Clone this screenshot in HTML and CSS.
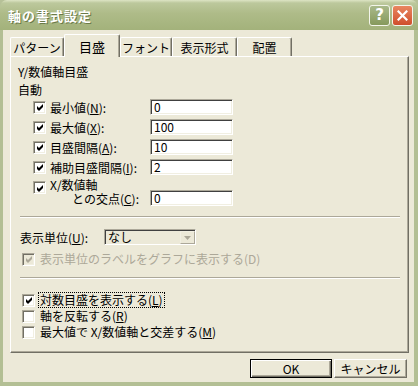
FILE: index.html
```html
<!DOCTYPE html>
<html lang="ja">
<head>
    <meta charset="UTF-8">
    <title>軸の書式設定</title>
    <link rel="stylesheet" href="styles.css">
</head>
<body>
    <div class="window">
        <div class="titlebar">
            <span class="title">軸の書式設定</span>
            <span class="tbtn help">?</span>
            <span class="tbtn close">
                <svg width="11" height="11" viewBox="0 0 11 11"><path d="M1.5 1.5 L9.5 9.5 M9.5 1.5 L1.5 9.5" stroke="#fff" stroke-width="2.2" stroke-linecap="square"/></svg>
            </span>
        </div>
        <div class="client">
            <div class="tabs">
                <div class="tab w-pattern">パターン</div>
                <div class="tab active w-scale">目盛</div>
                <div class="tab w-font">フォント</div>
                <div class="tab w-format">表示形式</div>
                <div class="tab w-align">配置</div>
            </div>
            <div class="panel">
                <div class="heading">Y/数値軸目盛</div>
                <div class="auto">自動</div>

                <div class="row">
                    <span class="cb"><svg width="7" height="7" viewBox="0 0 7 7"><path d="M0 2 L2 4 L6 0 L6 3 L2 7 L0 5 Z"/></svg></span>
                    <span class="lbl">最小値(<u>N</u>):</span>
                    <span class="field">0</span>
                </div>
                <div class="row">
                    <span class="cb"><svg width="7" height="7" viewBox="0 0 7 7"><path d="M0 2 L2 4 L6 0 L6 3 L2 7 L0 5 Z"/></svg></span>
                    <span class="lbl">最大値(<u>X</u>):</span>
                    <span class="field">100</span>
                </div>
                <div class="row">
                    <span class="cb"><svg width="7" height="7" viewBox="0 0 7 7"><path d="M0 2 L2 4 L6 0 L6 3 L2 7 L0 5 Z"/></svg></span>
                    <span class="lbl">目盛間隔(<u>A</u>):</span>
                    <span class="field">10</span>
                </div>
                <div class="row">
                    <span class="cb"><svg width="7" height="7" viewBox="0 0 7 7"><path d="M0 2 L2 4 L6 0 L6 3 L2 7 L0 5 Z"/></svg></span>
                    <span class="lbl">補助目盛間隔(<u>I</u>):</span>
                    <span class="field">2</span>
                </div>
                <div class="row two-line">
                    <span class="cb"><svg width="7" height="7" viewBox="0 0 7 7"><path d="M0 2 L2 4 L6 0 L6 3 L2 7 L0 5 Z"/></svg></span>
                    <span class="lbl"><span class="line">X/数値軸</span><span class="line indent">との交点(<u>C</u>):</span></span>
                    <span class="field">0</span>
                </div>

                <div class="sep"></div>

                <div class="unit-row">
                    <span class="unit-lbl">表示単位(<u>U</u>):</span>
                    <span class="combo">
                        <span class="combo-text">なし</span>
                        <span class="combo-btn"><svg width="7" height="4" viewBox="0 0 7 4"><path d="M0 0 H7 L3.5 4 Z" fill="#aca899"/></svg></span>
                    </span>
                </div>
                <div class="check-row disabled">
                    <span class="cb"><svg width="7" height="7" viewBox="0 0 7 7"><path d="M0 2 L2 4 L6 0 L6 3 L2 7 L0 5 Z"/></svg></span>
                    <span class="text">表示単位のラベルをグラフに表示する(D)</span>
                </div>

                <div class="sep sep-low"></div>

                <div class="options">
                    <div class="check-row">
                        <span class="cb"><svg width="7" height="7" viewBox="0 0 7 7"><path d="M0 2 L2 4 L6 0 L6 3 L2 7 L0 5 Z"/></svg></span>
                        <span class="text focus">対数目盛を表示する(<u>L</u>)</span>
                    </div>
                    <div class="check-row">
                        <span class="cb"></span>
                        <span class="text">軸を反転する(<u>R</u>)</span>
                    </div>
                    <div class="check-row">
                        <span class="cb"></span>
                        <span class="text">最大値で X/数値軸と交差する(<u>M</u>)</span>
                    </div>
                </div>
            </div>
            <div class="buttons">
                <span class="btn default">OK</span>
                <span class="btn cancel">キャンセル</span>
            </div>
        </div>
    </div>
</body>
</html>
```

FILE: styles.css
```css
body {margin: 0; font-family: "Noto Sans CJK JP", "Noto Sans", sans-serif; font-size: 12px; color: #000; background: #b6c198}
.window {width: 418px; height: 386px; display: flex; flex-direction: column; background: #b3bf94; border-radius: 7px 7px 0 0; overflow: hidden}

/* title bar */
.titlebar {height: 30px; flex: none; display: flex; align-items: center; padding: 0 5px 0 8px; box-sizing: border-box; background: linear-gradient(#dde4c4 0, #bcc89c 3px, #aebb88 45%, #a3b27b 100%)}
.title {flex: 1; color: #fff; font-weight: bold; font-size: 13px; letter-spacing: 1px; text-shadow: 1px 1px 0 #6b7a48}
.tbtn {width: 21px; height: 21px; box-sizing: border-box; border: 1px solid #f3f5ea; border-radius: 3px; display: flex; align-items: center; justify-content: center; color: #fff; font-weight: bold; font-size: 15px; font-family: "DejaVu Sans", sans-serif}
.help {background: linear-gradient(#a9b98a, #86995c); margin-right: 2px}
.close {background: linear-gradient(#e98660, #cf4f2c)}

.client {flex: 1; margin: 0 4px 4px 3px; background: #ece9d8}

/* tabs */
.tabs {display: flex; height: 26px; padding: 4px 0 0 7px; box-sizing: border-box}
.tab {margin-top: 3px; height: 19px; box-sizing: border-box; border: 1px solid; border-color: #fff #716f64 transparent #fff; border-bottom: none; box-shadow: inset -1px 0 #aca899; border-radius: 2px 2px 0 0; display: flex; align-items: center; justify-content: center; padding-top: 1px}
.tab.active {margin-top: 0; height: 23px; position: relative; z-index: 1; background: #ece9d8; font-size: 13px; padding-top: 0}
.w-pattern {width: 54px}
.w-scale {width: 56px}
.w-font {width: 52px}
.w-format {width: 65px}
.w-align {width: 55px}

/* panel */
.panel {margin-left: 7px; width: 399px; height: 297px; box-sizing: border-box; border: 1px solid; border-color: #fff #716f64 #716f64 #fff; box-shadow: inset -1px -1px 0 #aca899}
.heading {margin: 7px 0 0 7px; line-height: 16px}
.auto {margin: 3px 0 0 7px; line-height: 14px}

.row {display: flex; align-items: center; height: 20px; padding-left: 22px}
.lbl {margin-left: 4px; width: 100px; white-space: nowrap}
.two-line {height: 30px; align-items: flex-start}
.two-line .cb {margin-top: 4px}
.two-line .lbl {display: flex; flex-direction: column; padding-top: 1px}
.two-line .line {display: block; height: 14px; line-height: 14px}
.two-line .field {margin-top: 13px}
.indent {padding-left: 22px}

.cb {width: 13px; height: 13px; flex: none; box-sizing: border-box; background: #fff; border: 1px solid; border-color: #aca899 #fff #fff #aca899; box-shadow: inset 1px 1px 0 #716f64, inset -1px -1px 0 #f1efe2; display: flex; align-items: center; justify-content: center; padding: 1px 0 0 1px}
.cb svg {fill: #000}
.field {width: 83px; height: 16px; flex: none; box-sizing: border-box; background: #fff; border: 1px solid; border-color: #aca899 #fff #fff #aca899; box-shadow: inset 1px 1px 0 #404040, inset -1px -1px 0 #f1efe2; padding-left: 3px; line-height: 14px}

.sep {margin: 9px 8px 0 9px; border-top: 1px solid #aca899; border-bottom: 1px solid #fff}
.sep-low {margin-top: 10px}

.unit-row {display: flex; align-items: center; height: 18px; margin-top: 10px; padding-left: 9px}
.unit-lbl {width: 84px}
.combo {width: 92px; height: 16px; box-sizing: border-box; display: flex; border: 1px solid; border-color: #aca899 #fff #fff #aca899; box-shadow: inset 1px 1px 0 #404040; background: #ece9d8}
.combo-text {flex: 1; padding-left: 3px; line-height: 14px}
.combo-btn {width: 15px; height: 13px; margin: 1px 0 0 0; box-sizing: border-box; border: 1px solid; border-color: #f1efe2 #aca899 #aca899 #f1efe2; display: flex; align-items: center; justify-content: center}

.check-row {display: flex; align-items: center; height: 16px; padding-left: 11px}
.check-row .text {margin-left: 4px; line-height: 14px; padding: 0 1px}
.disabled {margin-top: 5px; color: #aca899}
.disabled .cb {background: #ece9d8}
.disabled .cb svg {fill: #aca899}
.focus {outline: 1px dotted #000}
.options {margin-top: 13px}

/* buttons */
.buttons {display: flex; justify-content: flex-end; gap: 2px; padding: 6px 7px 0 0}
.btn {height: 19px; box-sizing: border-box; display: flex; align-items: center; justify-content: center; border: 1px solid; border-color: #fff #716f64 #716f64 #fff; box-shadow: inset -1px -1px 0 #aca899}
.default {width: 82px; border-color: #000; box-shadow: inset 1px 1px 0 #fff, inset -1px -1px 0 #716f64, inset -2px -2px 0 #aca899}
.cancel {width: 73px}
```
